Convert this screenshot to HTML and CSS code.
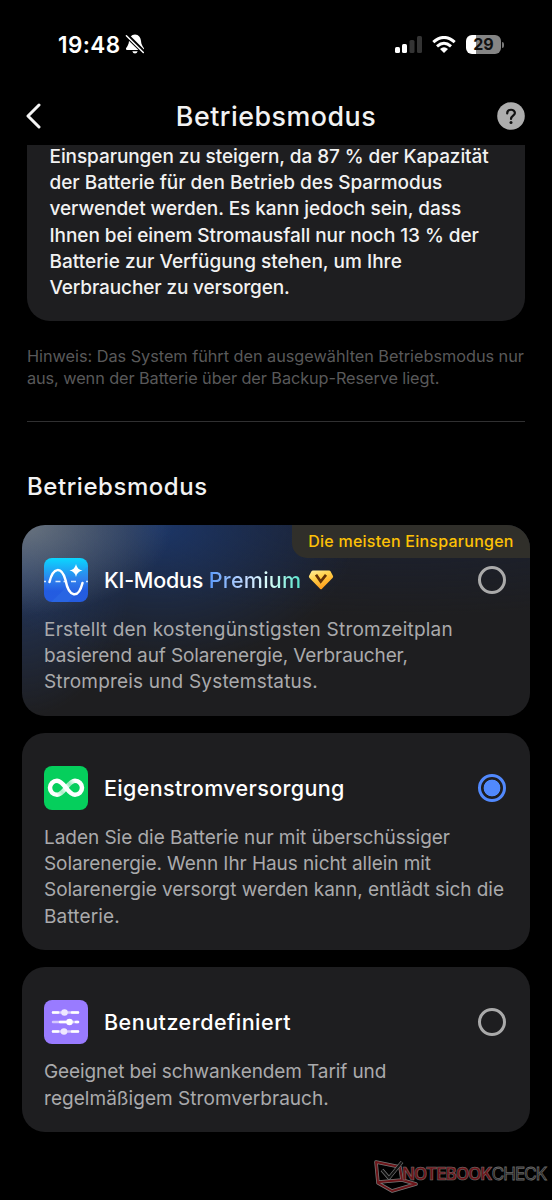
FILE: index.html
```html
<!DOCTYPE html>
<html lang="de">
<head>
<meta charset="utf-8">
<title>Betriebsmodus</title>
<link rel="stylesheet" href="styles.css">
</head>
<body>
<div class="status">
  <div class="clock">
    <span class="time">19:48</span>
    <svg width="20" height="20" viewBox="0 0 20 20"><path d="M10 .5C6.300 .5 4.300 3.500 4 7C3.800 10.500 2.500 12 1 14.200Q.500 16 2 16H18Q19.500 16 19 14.200C17.500 12 16.200 10.500 16 7C15.700 3.500 13.700 .5 10 .5ZM7.300 17.200H12.700Q12 19.400 10 19.400Q8 19.400 7.300 17.200Z" fill="#fff"/><path d="M2.700 .8L20 18" stroke="#000" stroke-width="2.200"/><path d="M1 1.800L18.300 18.800" stroke="#000" stroke-width="3"/><path d="M1.400 1.800L18.300 18.500" stroke="#fff" stroke-width="1.500" stroke-linecap="round"/></svg>
  </div>
  <div class="signals">
    <svg width="28" height="18" viewBox="0 0 28 18"><rect x="0" y="11" width="5" height="6" rx="1.500" fill="#fff"/><rect x="7" y="8" width="5" height="9" rx="1.500" fill="#fff"/><rect x="14.500" y="4" width="5" height="13" rx="1.500" fill="#343434"/><rect x="22" y="0" width="5" height="17" rx="1.500" fill="#343434"/></svg>
    <svg class="wifi" width="24" height="18" viewBox="0 0 24 18" fill="none" stroke="#fff" stroke-width="3"><path d="M1.300 6.200Q12-3.300 22.700 6.200"/><path d="M5 10.300Q12 4.200 19 10.300"/><path d="M8 13Q12 9.700 16 13L12 17Z" fill="#fff" stroke="none"/></svg>
    <div class="battery"><span>29</span></div>
    <i class="battery-tip"></i>
  </div>
</div>
<header class="nav">
  <svg width="16" height="26" viewBox="0 0 16 26"><path d="M14 2L3 13L14 24" fill="none" stroke="#f4f4f4" stroke-width="3" stroke-linecap="round" stroke-linejoin="round"/></svg>
  <h1>Betriebsmodus</h1>
  <svg width="28" height="28" viewBox="0 0 28 28"><circle cx="14" cy="14" r="13.800" fill="#adadad"/><path d="M10.200 11.400C10.200 6.500 17.900 6.700 17.900 11.100C17.900 13.700 14 13.800 14 17" fill="none" stroke="#111" stroke-width="2.200" stroke-linecap="round"/><circle cx="14" cy="20.500" r="1.500" fill="#111"/></svg>
</header>
<main>
  <section class="info">
    <p><span class="i1">Einsparungen zu steigern, da 87 % der Kapazität</span><span class="i2">der Batterie für den Betrieb des Sparmodus</span><span class="i3">verwendet werden. Es kann jedoch sein, dass</span><span class="i4">Ihnen bei einem Stromausfall nur noch 13 % der</span><span class="i5">Batterie zur Verfügung stehen, um Ihre</span><span class="i6">Verbraucher zu versorgen.</span></p>
  </section>
  <p class="note"><span class="n1">Hinweis: Das System führt den ausgewählten Betriebsmodus nur</span><span class="n2">aus, wenn der Batterie über der Backup-Reserve liegt.</span></p>
  <hr>
  <h2>Betriebsmodus</h2>
  <div class="modes">
    <article class="mode premium">
      <div class="ribbon">Die meisten Einsparungen</div>
      <div class="row">
        <svg class="icon" viewBox="0 0 44 44"><defs><linearGradient id="ai" x1="0" y1="0" x2="0" y2="1"><stop offset="0" stop-color="#0bd7ff"/><stop offset=".5" stop-color="#2e7fed"/><stop offset=".75" stop-color="#235ce1"/><stop offset="1" stop-color="#255ce0"/></linearGradient></defs><rect width="44" height="44" rx="8" fill="url(#ai)"/><path d="M7 44L44 8V24L24 44Z" fill="#397fec" opacity=".25"/><path d="M0 23.500H2M11.500 23.500H16.500M19.500 23.500H22.500M27 23.500H32M42 23.500H44" stroke="#d5eaff" stroke-width="1.500"/><path d="M5.500 24C9 9 17.500 8 21.500 22C25 40 34.500 41 38.500 25" fill="none" stroke="#fff" stroke-width="2.500" stroke-linecap="round"/><path d="M32 6Q33 11.500 38.500 12.500Q33 13.500 32 19Q31 13.500 25.500 12.500Q31 11.500 32 6Z" fill="#fff"/></svg>
        <h3><span class="t1">KI-Modus</span> <span class="shine">Premium</span></h3>
        <svg class="gem" width="26" height="20" viewBox="0 0 26 20"><defs><linearGradient id="gem" x1="0" y1="0" x2=".5" y2="1"><stop offset="0" stop-color="#fff0a0"/><stop offset=".45" stop-color="#ffd04a"/><stop offset="1" stop-color="#ff9d1b"/></linearGradient></defs><path d="M5 .5H21Q22 .5 22.500 1.300L25 6Q25.500 7 24.500 8L14 18.700Q13 19.700 12 18.700L1.500 8Q.500 7 1 6L3.500 1.300Q4 .5 5 .5Z" fill="url(#gem)"/><path d="M8 4.800L12.700 11.500L18 4.800" fill="none" stroke="#603007" stroke-width="2.700"/></svg>
        <i class="radio"></i>
      </div>
      <p><span class="a1">Erstellt den kostengünstigsten Stromzeitplan</span><span class="a2">basierend auf Solarenergie, Verbraucher,</span><span class="a3">Strompreis und Systemstatus.</span></p>
    </article>
    <article class="mode">
      <div class="row">
        <svg class="icon" viewBox="0 0 44 44"><defs><linearGradient id="loop" gradientUnits="userSpaceOnUse" x1="13" y1="29" x2="31" y2="15"><stop offset="0" stop-color="#fff"/><stop offset=".25" stop-color="#a8eec5"/><stop offset=".5" stop-color="#fff"/><stop offset=".72" stop-color="#8fe8b5"/><stop offset="1" stop-color="#fff"/></linearGradient></defs><rect width="44" height="44" rx="8" fill="#05cf5c"/><path d="M13 28.800C20 28.800 24 14.800 31 14.800" fill="none" stroke="url(#loop)" stroke-width="4.500"/><path d="M13 28.800A7 7 0 0 1 13 14.800C20 14.800 24 28.800 31 28.800A7 7 0 0 0 31 14.800" fill="none" stroke="#fff" stroke-width="4.500"/></svg>
        <h3 class="t2">Eigenstromversorgung</h3>
        <i class="radio on"></i>
      </div>
      <p><span class="b1">Laden Sie die Batterie nur mit überschüssiger</span><span class="b2">Solarenergie. Wenn Ihr Haus nicht allein mit</span><span class="b3">Solarenergie versorgt werden kann, entlädt sich die</span><span class="b4">Batterie.</span></p>
    </article>
    <article class="mode">
      <div class="row">
        <svg class="icon" viewBox="0 0 44 44"><rect width="44" height="44" rx="8" fill="#997bff"/><path d="M9 12.500H34M9 22H34M9 31.500H34" stroke="#d5c8ff" stroke-width="2.500" stroke-linecap="round"/><path d="M9 12.500H14M28 12.500H34M16 22H22M32 22H34M9 31.500H14M28 31.500H34" stroke="#fff" stroke-width="2.500" stroke-linecap="round"/><circle cx="20.500" cy="12.500" r="3.300" fill="#eee8ff"/><circle cx="25.500" cy="22" r="3.300" fill="#fff"/><circle cx="20" cy="31.500" r="3.300" fill="#eee8ff"/></svg>
        <h3 class="t3">Benutzerdefiniert</h3>
        <i class="radio"></i>
      </div>
      <p><span class="c1">Geeignet bei schwankendem Tarif und</span><span class="c2">regelmäßigem Stromverbrauch.</span></p>
    </article>
  </div>
</main>
<div class="watermark">
  <svg width="44" height="34" viewBox="0 0 44 34" fill="none" stroke-linejoin="round"><path d="M28 20L26 7L2 2L4 23L18 31L42 24L28 20L5 22" stroke="#777" stroke-width="3.500"/><path d="M28 20L26 7L2 2L4 23L18 31L42 24L28 20L5 22" stroke="#6d1519" stroke-width="2"/><path d="M8 10L15 18L28 2" stroke="#777" stroke-width="3.500"/><path d="M8 10L15 18L28 2" stroke="#111" stroke-width="2"/></svg>
  <span class="brand"><b>NOTEBOOK</b><span>CHECK</span></span>
</div>
</body>
</html>
```
FILE: styles.css
```css
* { box-sizing: border-box; }
body {
  margin: 0;
  height: 1200px;
  position: relative;
  overflow: hidden;
  background: #000;
  color: #f2f2f2;
  font-family: Inter, "Liberation Sans", sans-serif;
}
h1, h2, h3, p { margin: 0; font-weight: 460; white-space: nowrap; }
svg { display: block; flex: none; }
p span { display: block; width: max-content; }

.status { height: 87px; padding: 33px 48px 0 58px; display: flex; justify-content: space-between; align-items: flex-start; }
.clock { display: flex; align-items: center; gap: 5px; height: 22px; }
.time { font-size: 22.5px; font-weight: 600; letter-spacing: .4px; color: #fff; }
.signals { display: flex; align-items: center; height: 22px; padding-top: 1px; }
.wifi { margin-left: 9px; }
.battery { width: 35px; height: 19px; margin-left: 10px; border-radius: 6px; background: linear-gradient(90deg, #fff 10px, #858585 10px); color: #111; font-size: 16px; line-height: 19px; font-weight: 700; text-align: center; }
.battery-tip { width: 2px; height: 6px; margin-left: 1px; border-radius: 0 3px 3px 0; background: #777; }

.nav { height: 58px; padding: 0 27px 1px 25px; display: flex; align-items: center; justify-content: space-between; }
.nav h1 { font-size: 26.8px; letter-spacing: .5px; padding-left: 14px; line-height: 36px; }

.info { margin: 0 27.5px 0 27px; height: 176px; padding: 0 22.5px; border-radius: 0 0 23px 23px; background: #1e1e20; font-size: 19px; line-height: 26.2px; overflow: hidden; }
.info p { margin-top: -1.100px; }
.note { margin: 23.500px 27px 0; color: #59595a; font-size: 16.3px; line-height: 22.6px; }
.note span { font-weight: 400; }
hr { height: 1px; margin: 31.300px 27px 0; border: 0; background: #303031; }
h2 { margin: 47px 27px 0; font-size: 24px; letter-spacing: .55px; line-height: 36px; }

.modes { display: flex; flex-direction: column; gap: 17px; margin: 20.200px 22px 0; }
.mode { position: relative; padding: 33px 22px 20.5px; border-radius: 23px; background: #1e1e20; overflow: hidden; }
.premium {
  background:
    radial-gradient(ellipse 150px 90px at 0 0, rgba(130, 137, 139, .75), transparent),
    radial-gradient(ellipse 200px 140px at 27% 0, rgba(27, 63, 130, .7), transparent),
    radial-gradient(ellipse 110px 150px at 0 22%, rgba(37, 65, 120, .7), transparent),
    radial-gradient(ellipse 400px 90px at 75% 0, rgba(24, 35, 65, .5), transparent),
    #1e1e20;
}
.row { display: flex; align-items: center; height: 44px; }
.icon { width: 44px; height: 44px; }
.row h3 { margin-left: 16px; font-size: 21.5px; color: #fff; }
.row .t2 { letter-spacing: .35px; }
.row .t3 { letter-spacing: .5px; }
.t1 { letter-spacing: -.25px; }
.gem { margin-left: 7px; }
.shine { letter-spacing: .25px; color: transparent; background: linear-gradient(90deg, #5b9afa, #c5dcff 42%, #dcfff9 65%, #55e4cc); background-clip: text; -webkit-background-clip: text; }
.radio { width: 28px; height: 28px; margin: 0 2.500px 0 auto; border: 3px solid #aaa; border-radius: 50%; }
.radio.on { border-color: #5189fd; background: radial-gradient(circle, #5189fd 8px, transparent 8.700px); }
.mode p { margin-top: 15px; color: #aaaaac; font-size: 19px; font-weight: 400; line-height: 26.1px; padding-bottom: .3px; }
.ribbon { position: absolute; top: 0; right: 0; width: 238px; height: 32.5px; text-align: center; border-radius: 0 0 0 15px; background: #302f2a; color: #fdc106; font-size: 16px; font-weight: 460; letter-spacing: .25px; line-height: 33px; white-space: nowrap; }

/* per-line tracking */
.i1 { letter-spacing: -.08px; }
.i2 { letter-spacing: -.03px; }
.i3 { letter-spacing: -.06px; }
.i4 { letter-spacing: -.07px; }
.i5 { letter-spacing: .02px; }
.i6 { letter-spacing: -.13px; }
.n1 { letter-spacing: -.03px; }
.n2 { letter-spacing: -.08px; }
.a1 { letter-spacing: .21px; }
.a2 { letter-spacing: -.12px; }
.a3 { letter-spacing: .18px; }
.b1 { letter-spacing: -.04px; }
.b2 { letter-spacing: -.07px; }
.b3 { letter-spacing: -.04px; }
.b4 { letter-spacing: .15px; }
.c1 { letter-spacing: -.1px; }
.c2 { letter-spacing: .04px; }

.watermark { position: absolute; left: 374px; top: 1160px; display: flex; }
.brand { margin: 3px 0 0 -16px; font-size: 17px; line-height: 23px; white-space: nowrap; letter-spacing: -.9px; }
.brand b { color: #6d1519; -webkit-text-stroke: .5px #777; }
.brand span { color: #111; -webkit-text-stroke: .8px #666; }
```
